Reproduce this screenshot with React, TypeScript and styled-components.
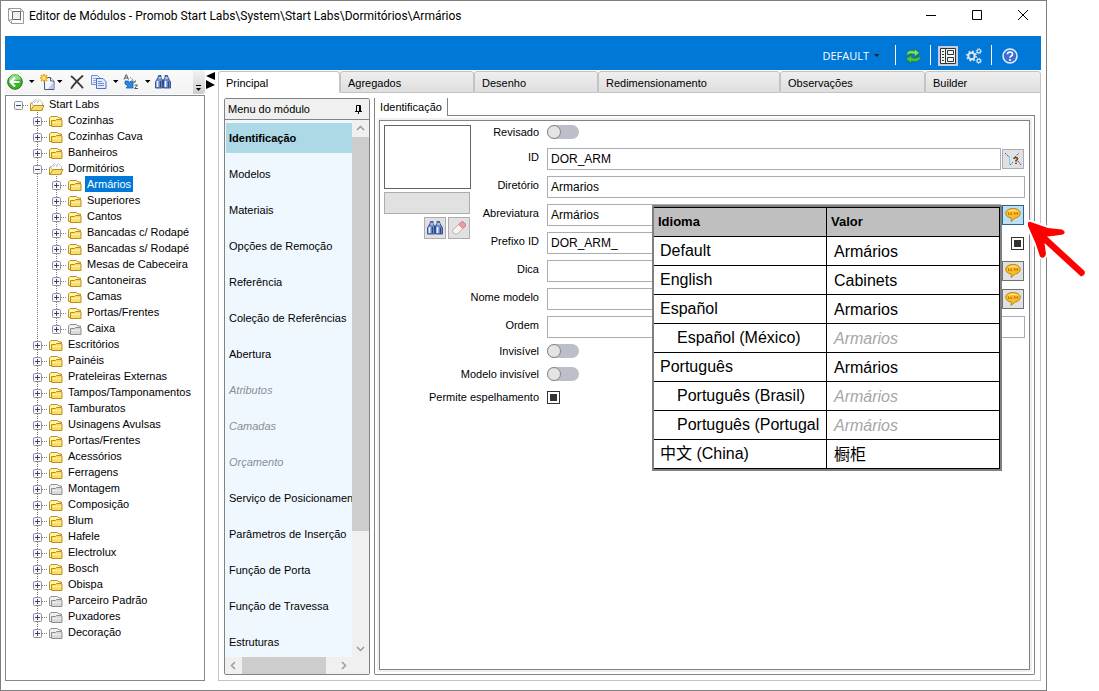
import React from "react";
import styled, { createGlobalStyle, css } from "styled-components";

const GlobalStyle = createGlobalStyle`
  *, *::before { box-sizing: border-box; }
  body { margin: 0; background: #fff; color: #000; font: 11px/16px "Liberation Sans", Arial, "Noto Sans CJK SC", sans-serif; }
  button, input { font: inherit; color: inherit; margin: 0; }
  button { border: 0; padding: 0; background: none; }
  svg { display: block; flex: none; }
`;

/* ---------- window frame ---------- */

const Window = styled.div`
  display: flex;
  flex-direction: column;
  height: 100vh;
  min-height: 500px;
  margin-right: 52px;
  padding: 0 5px 9px 4px;
  border: 1px solid #7f7f7f;
  background: #fff;
`;

const TitleBar = styled.header`
  display: flex;
  align-items: center;
  flex: none;
  height: 35px;
  padding: 0 12px 5px 3px;
`;

const Title = styled.h1`
  flex: 1;
  margin: 0 0 0 5px;
  font: 12px/16px Roboto, "Open Sans", sans-serif;
  white-space: nowrap;
  overflow: hidden;
`;

const WindowControls = styled.div`
  display: flex;
  gap: 34px;
`;

const Ribbon = styled.div`
  display: flex;
  align-items: center;
  justify-content: flex-end;
  flex: none;
  height: 34px;
  padding: 6px 21px 0 0;
  background: #0078d7;
`;

const RibbonMenu = styled.button`
  display: flex;
  align-items: center;
  gap: 5px;
  margin-right: 15px;
  color: #fff;
  font: 11px/16px "Open Sans", "Noto Sans", sans-serif;
`;

const RibbonDivider = styled.span`
  width: 1px;
  height: 20px;
  margin-bottom: 2px;
  background: #fff;
`;

const RibbonButton = styled.button<{ $active?: boolean }>`
  display: grid;
  place-items: center;
  width: 20px;
  height: 20px;
  background: ${(p) => (p.$active ? "#c4cede" : "transparent")};
`;

const RibbonGroup = styled.div`
  display: flex;
  gap: 6px;
  padding: 0 7px;
`;

const HelpGroup = styled(RibbonGroup)`
  padding: 0 0 0 8px;
`;

const Body = styled.div`
  display: flex;
  flex: 1;
  min-height: 0;
`;

/* ---------- tree column ---------- */

const Sidebar = styled.aside`
  display: flex;
  flex-direction: column;
  width: 200px;
  flex: none;
`;

const Toolbar = styled.div`
  display: flex;
  align-items: center;
  flex: none;
  height: 24px;
  margin-bottom: 1px;
  padding-left: 2px;
  border-radius: 0 3px 3px 0;
  background: linear-gradient(#fafafa, #f3f3f3);
`;

const ToolButton = styled.button<{ $width: number; $tight?: boolean }>`
  display: flex;
  align-items: center;
  gap: ${(p) => (p.$tight ? 2 : 6)}px;
  width: ${(p) => p.$width}px;
`;

const OverflowGrip = styled.button`
  display: flex;
  align-items: flex-end;
  justify-content: center;
  width: 12px;
  height: 24px;
  margin-left: auto;
  padding-bottom: 3px;
  border-radius: 0 3px 3px 0;
  background: linear-gradient(#f4f4f4, #cdcdcd);
`;

const Tree = styled.ul`
  flex: 1;
  min-height: 0;
  margin: 0;
  padding: 0 0 0 3px;
  border: 1px solid #828790;
  list-style: none;
  overflow: hidden;
`;

const TreeRow = styled.li`
  display: flex;
  height: 16px;
`;

const TreeSpacer = styled.span`
  width: 19px;
`;

const TreeLabel = styled.span<{ $selected?: boolean }>`
  padding: 0 2px;
  line-height: 16px;
  white-space: nowrap;
  ${(p) => p.$selected && css`background: #0078d7; color: #fff;`}
`;

const Splitter = styled.div`
  width: 13px;
  flex: none;
  padding: 2px 0 0 1px;
`;

/* ---------- page with tabs ---------- */

const Page = styled.main`
  display: flex;
  flex-direction: column;
  flex: 1;
  min-width: 0;
`;

const TabStrip = styled.div`
  display: grid;
  grid-template-columns: 122fr 134fr 124fr 182fr 145fr 116fr;
  flex: none;
  height: 23px;
  padding-top: 1px;
`;

const Tab = styled.button<{ $active?: boolean }>`
  min-width: 0;
  padding: 1px 0 0 7px;
  border: 1px solid #c3c3c3;
  border-bottom-color: ${(p) => (p.$active ? "#fff" : "#c3c3c3")};
  border-radius: 3px 3px 0 0;
  background: ${(p) => (p.$active ? "#fff" : "linear-gradient(#efefef, #dedede)")};
  text-align: left;
  white-space: nowrap;
  overflow: hidden;
`;

const PageContent = styled.div`
  display: flex;
  flex: 1;
  gap: 4px;
  min-height: 0;
  padding: 5px;
  border: 1px solid #c3c3c3;
  border-top: 0;
`;

/* ---------- module menu ---------- */

const MenuPanel = styled.nav`
  display: flex;
  flex-direction: column;
  width: 146px;
  flex: none;
  border: 1px solid #828282;
  border-radius: 2px;
  background: #f0f8ff;
`;

const MenuHeader = styled.div`
  display: flex;
  align-items: center;
  justify-content: space-between;
  flex: none;
  height: 21px;
  padding: 0 7px 0 3px;
  border-bottom: 1px solid #828282;
  background: #f0f0f0;
`;

const MenuScroller = styled.div`
  display: grid;
  grid-template: minmax(0, 1fr) 17px / minmax(0, 1fr) 17px;
  flex: 1;
  min-height: 0;
`;

const MenuItems = styled.div`
  display: flex;
  flex-direction: column;
  gap: 6px;
  min-width: 0;
  padding: 3px 0 0 1px;
  overflow: hidden;
`;

const MenuItem = styled.button<{ $selected?: boolean; $muted?: boolean }>`
  flex: none;
  height: 30px;
  padding: 0 0 0 3px;
  text-align: left;
  white-space: nowrap;
  overflow: hidden;
  background: ${(p) => (p.$selected ? "#add8e6" : "transparent")};
  font-weight: ${(p) => (p.$selected ? 700 : 400)};
  ${(p) => p.$muted && css`color: #8a8f94; font-style: italic;`}
`;

const ScrollBar = styled.div<{ $horizontal?: boolean }>`
  display: flex;
  flex-direction: ${(p) => (p.$horizontal ? "row" : "column")};
  background: #f0f0f0;
`;

const ScrollArrow = styled.button`
  display: grid;
  place-items: center;
  width: 17px;
  height: 17px;
  flex: none;
`;

const ScrollPart = styled.div<{ $size: number; $thumb?: boolean }>`
  flex: ${(p) => p.$size} 1 0;
  background: ${(p) => (p.$thumb ? "#cdcdcd" : "transparent")};
`;

const ScrollCorner = styled.div`
  background: #f0f0f0;
`;

/* ---------- identification panel ---------- */

const Panel = styled.section`
  display: flex;
  flex-direction: column;
  flex: 1;
  min-width: 0;
`;

const PanelTabs = styled.div`
  display: flex;
  flex: none;
  height: 18px;
`;

const PanelTab = styled.button`
  width: 74px;
  border: 1px solid #828282;
  border-width: 0 1px;
`;

const PanelTabRest = styled.div`
  flex: 1;
  border-bottom: 1px solid #828282;
`;

const PanelBody = styled.div`
  display: flex;
  flex: 1;
  min-height: 0;
  padding: 2px;
  border: 1px solid #828282;
  border-top: 0;
  border-radius: 0 0 2px 2px;
`;

const PanelFrame = styled.div`
  display: flex;
  flex: 1;
  min-width: 0;
  padding: 2px;
  background: #f0f0f0;
`;

const Form = styled.form`
  display: flex;
  flex: 1;
  min-width: 0;
  padding: 4px;
  border: 1px solid #828282;
  background: #fff;
`;

const Preview = styled.div`
  display: flex;
  flex-direction: column;
  width: 88px;
  flex: none;
`;

const PreviewImage = styled.div`
  width: 87px;
  height: 64px;
  margin-bottom: 3px;
  border: 1px solid #646464;
`;

const PreviewName = styled.div`
  width: 86px;
  height: 22px;
  margin-bottom: 3px;
  border: 1px solid #abadb3;
  background: #e1e1e1;
`;

const PreviewActions = styled.div`
  display: flex;
  justify-content: flex-end;
  gap: 2px;
  padding-right: 2px;
`;

const IconButton = styled.button<{ $tall?: boolean; $active?: boolean; $dark?: boolean }>`
  display: grid;
  place-items: center;
  flex: none;
  width: 22px;
  height: ${(p) => (p.$tall ? 22 : 20)}px;
  border: 1px solid ${(p) => (p.$active ? "#2c628b" : p.$dark ? "#707070" : "#adadad")};
  background: ${(p) => (p.$active ? "#bee0f4" : "#e1e1e1")};
`;

const Fields = styled.div`
  flex: 1;
  min-width: 0;
`;

const FieldRow = styled.div`
  position: relative;
  display: flex;
  align-items: center;
  height: 22px;
  margin-bottom: 6px;
`;

const SwitchRow = styled.div`
  display: flex;
  align-items: center;
  height: 14px;
  margin-bottom: 9px;
`;

const Label = styled.label<{ $raised?: boolean }>`
  display: flex;
  justify-content: flex-end;
  width: 67px;
  flex: none;
  margin-right: 8px;
  white-space: nowrap;
  ${(p) => p.$raised && css`align-self: flex-start; line-height: 18px;`}
`;

const TextInput = styled.input`
  flex: 1;
  min-width: 0;
  height: 22px;
  padding: 0 3px;
  border: 1px solid #abadb3;
  border-radius: 0;
  background: #fff;
  font-size: 12px;
  outline: 0;
`;

const FieldEnd = styled.div`
  display: flex;
  justify-content: flex-end;
  width: 23px;
  margin-left: 1px;
  padding-right: 1px;
`;

const Switch = styled.input`
  appearance: none;
  width: 32px;
  height: 14px;
  border-radius: 7px;
  background: #bcbec9;
  &::before {
    content: "";
    display: block;
    width: 14px;
    height: 14px;
    border: 1px solid #858585;
    border-radius: 50%;
    background: #e4e4e4;
  }
`;

const Check = styled.input`
  appearance: none;
  display: grid;
  place-items: center;
  width: 13px;
  height: 13px;
  border: 1px solid #333;
  background: #fff;
  &::before {
    content: "";
    width: 7px;
    height: 7px;
    background: #333;
  }
`;

/* ---------- translation popup ---------- */

const Popup = styled.div`
  position: absolute;
  z-index: 1;
  top: 1px;
  right: 23px;
  width: 350px;
  border: 2px solid #808080;
  background: #fff;
`;

const LangTable = styled.table`
  width: 100%;
  table-layout: fixed;
  border-collapse: separate;
  border-spacing: 0;
  border-top: 1px solid #000;
  border-right: 1px solid #000;
  font-size: 16px;
  line-height: 18px;
`;

const HeadCell = styled.th`
  height: 29px;
  padding: 0 4px;
  border-bottom: 1px solid #000;
  background: #bfbfbf;
  font-size: 13px;
  text-align: left;
  &:first-child { width: 172px; }
  & + & { border-left: 1px solid #000; }
`;

const NameCell = styled.td<{ $nested?: boolean }>`
  height: 29px;
  padding: 0 7px 0 ${(p) => (p.$nested ? 23 : 6)}px;
  border-bottom: 1px solid #000;
`;

const NameText = styled.div`
  white-space: nowrap;
  overflow: hidden;
`;

const ValueCell = styled.td<{ $inherited?: boolean }>`
  height: 29px;
  padding: 2px 7px 0;
  border-bottom: 1px solid #000;
  border-left: 1px solid #000;
  ${(p) => p.$inherited && css`color: #a6a6a6; font-style: italic;`}
`;

const Pointer = styled.div`
  position: absolute;
  z-index: 2;
  top: 14px;
  right: -63px;
  pointer-events: none;
`;

/* ---------- icons ---------- */

const CubeIcon = () => (
  <svg width="16" height="16" viewBox="0 0 16 16" fill="none" stroke="#777">
    <path d="M.5.5h12l3 3v12h-12l-3-3z" stroke="#999" />
    <path d="M.5.5 4 3.500M15.500 3.500l-3 0M.5 12.500l3.500-1M12.500.5v12M3.500 12.500v3M3.500 11.500l-3 1" stroke="#aaa" />
    <path d="M4.500 3.500h8v8h-8z" fill="#efefef" stroke="#666" />
    <path d="m5 11 7-7" stroke="#fff" />
  </svg>
);

const Caret = ({ color = "#000" }: { color?: string }) => (
  <svg width="6" height="4" viewBox="0 0 6 4"><path d="M0 0h5.500L2.750 3z" fill={color} /></svg>
);

const BackIcon = () => (
  <svg width="16" height="16" viewBox="0 0 16 16">
    <circle cx="8" cy="8" r="7.300" fill="#3fae2a" stroke="#1d7a1a" />
    <path d="M2 7a6 6 0 0 1 12-1c-3-2-7 3-12 1z" fill="#8fdc7c" />
    <path d="M8 3.500 3.500 8 8 12.500M4 8h8.500" fill="none" stroke="#fff" strokeWidth="2.200" />
  </svg>
);

const NewIcon = () => (
  <svg width="15" height="16" viewBox="0 0 15 16">
    <path d="M4.500 3.500h6l3.500 3.500v8.500h-9.500z" fill="#f1f5fe" stroke="#4d5a7c" />
    <path d="M13.500 8v7H8z" fill="#b9c9ee" />
    <path d="M10.500 3.500V7H14" fill="#fff" stroke="#4d5a7c" />
    <path d="M4 0v8M0 4h8M1 1l6 6M7 1 1 7" stroke="#e59a12" strokeWidth="1.600" />
    <circle cx="4" cy="4" r="2" fill="#ffe45a" />
  </svg>
);

const DeleteIcon = () => (
  <svg width="14" height="14" viewBox="0 0 14 14" fill="none" stroke="#3c3c3c" strokeLinecap="round">
    <path d="M1.500 1.500C5 4 9 9 12.500 12.500" strokeWidth="1.800" />
    <path d="M12.500 1C8 5 4 9 1.500 13" strokeWidth="1.800" />
  </svg>
);

const CopyIcon = () => (
  <svg width="16" height="14" viewBox="0 0 16 14" stroke="#6d90d0">
    <path d="M.5.5h6l2 2v7h-8z" fill="#e9f0fd" />
    <path d="M2 3.500h4M2 5.500h4M2 7.500h3" stroke="#8fabde" />
    <path d="M5.500 3.500h6.500l3 3v7H5.500z" fill="#e3ecfd" stroke="#4b73bd" />
    <path d="M7 6.500h4M7 8.500h6M7 10.500h6" stroke="#6d90d0" />
  </svg>
);

const SortIcon = () => (
  <svg width="16" height="16" viewBox="0 0 16 16" fill="none">
    <path d="M1 5.500 3 .8h.5l2 4.700M2 4h3" stroke="#444" strokeWidth=".9" />
    <path d="m7 3 5 5M10 8.500h2.500V6" stroke="#888" strokeDasharray="2 .7" />
    <path d="M2 7h3.500l1 1.500L8 7h2v7H3l2-2-3-2z" fill="#2d86dc" stroke="#1464b4" strokeWidth=".8" />
    <path d="M11.500 11h3l-3 3.500h3.500" stroke="#444" strokeWidth=".9" />
  </svg>
);

const BinocularsIcon = () => (
  <svg width="16" height="14" viewBox="0 0 16 14">
    <path d="M3.500.5h2.500v2l1.500 2.500v8h-7V7L3 2.500zM10 .5h2.500l.5 2L15.500 7v6h-7V5L10 2.500z" fill="#6f8dc8" stroke="#2c4888" strokeWidth=".9" />
    <path d="M2.500 6v6M10.500 6v6" stroke="#eef3fd" strokeWidth="1.700" />
    <path d="M5.500 6v6M13.500 6.500v6" stroke="#2c4888" strokeWidth="1.200" />
    <path d="M3.500 3h3M10 3h3" stroke="#dce6fa" />
    <path d="M7 5.500h2v3H7z" fill="#2c4888" />
  </svg>
);

const EraserIcon = () => (
  <svg width="16" height="16" viewBox="0 0 16 16">
    <path d="M2 10 9.500 2.500q2-1.500 3.500 0l1 1q1.500 1.500 0 3L7 13.500q-2 1.500-3.500 0L2 12.500q-1-1 0-2.500z" fill="#f8f4f4" stroke="#b4aeb0" />
    <path d="m7.500 4.500 2-2q2-1.500 3.500 0l1 1q1.500 1.500 0 3l-2 2z" fill="#ee9aa4" stroke="#d8838e" />
  </svg>
);

const RefreshIcon = () => (
  <svg width="18" height="16" viewBox="0 0 18 16" stroke="#187d28" strokeWidth=".7">
    <path d="M2.500 7.500C2 3.500 6 1.500 10.500 3V.8L15.500 5l-5 3.800V6.300C8 5.500 5.500 5.500 2.500 7.500z" fill="#7fdc6a" />
    <path d="M16.500 8c.5 4.500-4 6.500-9 5v2.300L2 11l5.500-4v2.700c3 .8 6 .8 9-1.700z" fill="#55c048" />
  </svg>
);

const FormIcon = () => (
  <svg width="16" height="16" viewBox="0 0 16 16" fill="none" stroke="#333">
    <path d="M.5.5h15v15H.5z" fill="#f4f4f4" />
    <path d="M5.500.5v15M2 3.500h2M2 6.500h2M2 9.500h2M2 12.500h2M7.500 2.500h6v4h-6zM7.500 9.500h6v4h-6z" />
  </svg>
);

const GearsIcon = () => (
  <svg width="16" height="16" viewBox="0 0 16 16" fill="none" stroke="#e0e7ef">
    <circle cx="5.500" cy="8" r="3.200" strokeWidth="2" />
    <circle cx="5.500" cy="8" r="4.700" strokeWidth="1.500" strokeDasharray="1.850 1.850" />
    <circle cx="12.800" cy="3.200" r="1.700" strokeWidth="1.200" />
    <circle cx="12.800" cy="3.200" r="2.600" strokeDasharray="1 1" />
    <circle cx="12.800" cy="12.800" r="1.700" strokeWidth="1.200" />
    <circle cx="12.800" cy="12.800" r="2.600" strokeDasharray="1 1" />
  </svg>
);

const HelpIcon = () => (
  <svg width="16" height="16" viewBox="0 0 16 16" fill="none">
    <circle cx="8" cy="8" r="7" fill="#3b6fd6" stroke="#e4edfb" strokeWidth="1.500" />
    <path d="M5.500 6.300q0-2.300 2.500-2.300t2.500 2.200Q10.500 7.500 9 8.200q-1 .5-1 1.600" stroke="#fff" strokeWidth="1.700" />
    <circle cx="8" cy="12" r="1.100" fill="#fff" />
  </svg>
);

const FolderIcon = ({ gray, open }: { gray?: boolean; open?: boolean }) => {
  const line = gray ? "#8f8f8f" : "#b8901c";
  const fill = gray ? "#d9d9d9" : "#fbdc6a";
  const light = gray ? "#f0f0f0" : "#fff3ae";
  return (
    <svg width="19" height="16" viewBox="0 0 19 16" stroke={line}>
      {open ? (
        <>
          <path d="M2.500 14V7.500l1.500-1h3l1 1h6.500V14z" fill={light} />
          <path d="m4 7 3.500-3.500L9.500 5l2-1.500L15 7l-1.500 3H5z" fill="#fff" stroke="#a9b9c0" strokeWidth=".8" />
          <path d="m6 6.500 2-1.500M9 7l2-2" stroke="#8fb8d8" strokeWidth=".8" />
          <path d="M2.500 14.500 6 9.500h10l-2.500 5z" fill={fill} />
        </>
      ) : (
        <>
          <path d="M2.500 13.500V6L4 4.500h6.500L12 6h2.500v7.500z" fill={light} />
          <path d="M4.500 14.500V8.500h4l1-1h4.500l1 1v6z" fill={fill} />
          <path d="M5.500 10.500h8.500" stroke={light} />
        </>
      )}
    </svg>
  );
};

const Expander = ({ level, expanded, last }: { level: number; expanded?: boolean; last?: boolean }) => (
  <svg width="19" height="16" viewBox="0 0 19 16" fill="none">
    <g stroke="#808080" strokeDasharray="1 1">
      {level > 0 && <path d={last ? "M9.500 0v9" : "M9.500 0v16"} />}
      <path d="M14 9.500h5" />
    </g>
    <rect x="5.500" y="5.500" width="8" height="8" rx="1" fill="#f6f6f6" stroke="#919191" />
    <path d={expanded ? "M7 9.500h5" : "M7 9.500h5M9.500 7v5"} stroke="#2b4493" />
  </svg>
);

/* dotted line of the parent level that runs past its nested rows */
const GuideLine = () => (
  <svg width="19" height="16" viewBox="0 0 19 16">
    <path d="M9.500 0v16" stroke="#808080" strokeDasharray="1 1" />
  </svg>
);

const PinIcon = () => (
  <svg width="7" height="9" viewBox="0 0 7 9" fill="none" stroke="#000">
    <path d="M1.500 6V.5h4V6M4.500 0v6M0 6.500h7M3.500 6.500V9" />
  </svg>
);

const Chevron = ({ d }: { d: string }) => (
  <svg width="9" height="9" viewBox="0 0 9 9" fill="none" stroke="#9c9c9c" strokeWidth="1.500"><path d={d} /></svg>
);

const BalloonIcon = () => (
  <svg width="16" height="16" viewBox="0 0 16 16">
    <path d="M8 1.500c4.300 0 7.300 2 7.300 4.800 0 2.600-2.300 4.200-5 4.700L6 14.500l.3-3.500C3 10.600.7 8.800.7 6.300c0-2.800 3-4.800 7.300-4.800z" fill="#fbbc20" stroke="#a87818" strokeWidth=".8" />
    <path d="M2.500 4.500q5.500-4 11 0-5.500-1-11 0z" fill="#ffe690" />
    <path d="M3.500 5.500v2h1M6 5.500v2h1M9.500 5.500v2M11 5.500v2M12.500 5.500v2" stroke="#b0620c" strokeWidth=".9" fill="none" />
  </svg>
);

const TraceIcon = () => (
  <svg width="18" height="16" viewBox="0 0 18 16" fill="none">
    <path d="m1 2 4 4" stroke="#2c5ad8" strokeDasharray="2 1" />
    <path d="M5.500 5.500V14" stroke="#22b4e8" strokeDasharray="1 1" />
    <path d="m6 14 3-3M11 6l4-4M14 10l3 4" stroke="#2c5ad8" strokeDasharray="2 1" />
    <path d="M10 8q0-1.500 1.800-1.500T13.500 8q0 1-1.500 1.500v1M12 11.500v1.500" stroke="#7a3c10" strokeWidth="1.600" />
  </svg>
);

const arrowShape =
  "M4 5Q5 3 8 4.500L24 10 38 11.500q5 2.500 1 5-9 1.500-16 2L60.500 53q1.500 4-3.500 5.500L20.500 25 22 36q-2 6-6 2.500L11.500 25 4 8z";

const ArrowDrawing = () => (
  <svg width="64" height="64" viewBox="0 0 64 64" strokeLinejoin="round">
    <path d={arrowShape} fill="#fff" stroke="#fff" strokeWidth="4" />
    <path d={arrowShape} fill="#fe0000" />
  </svg>
);

/* ---------- data ---------- */

type Node = { name: string; level: number; gray?: boolean; open?: boolean; selected?: boolean; last?: boolean };

const nodes: Node[] = [
  { name: "Start Labs", level: 0, open: true },
  { name: "Cozinhas", level: 1 },
  { name: "Cozinhas Cava", level: 1 },
  { name: "Banheiros", level: 1 },
  { name: "Dormitórios", level: 1, open: true },
  { name: "Armários", level: 2, selected: true },
  { name: "Superiores", level: 2 },
  { name: "Cantos", level: 2 },
  { name: "Bancadas c/ Rodapé", level: 2 },
  { name: "Bancadas s/ Rodapé", level: 2 },
  { name: "Mesas de Cabeceira", level: 2 },
  { name: "Cantoneiras", level: 2 },
  { name: "Camas", level: 2 },
  { name: "Portas/Frentes", level: 2 },
  { name: "Caixa", level: 2, gray: true, last: true },
  { name: "Escritórios", level: 1 },
  { name: "Painéis", level: 1 },
  { name: "Prateleiras Externas", level: 1 },
  { name: "Tampos/Tamponamentos", level: 1 },
  { name: "Tamburatos", level: 1 },
  { name: "Usinagens Avulsas", level: 1 },
  { name: "Portas/Frentes", level: 1 },
  { name: "Acessórios", level: 1 },
  { name: "Ferragens", level: 1 },
  { name: "Montagem", level: 1, gray: true },
  { name: "Composição", level: 1 },
  { name: "Blum", level: 1 },
  { name: "Hafele", level: 1 },
  { name: "Electrolux", level: 1 },
  { name: "Bosch", level: 1 },
  { name: "Obispa", level: 1 },
  { name: "Parceiro Padrão", level: 1, gray: true },
  { name: "Puxadores", level: 1, gray: true },
  { name: "Decoração", level: 1, gray: true, last: true },
];

const tabs = ["Principal", "Agregados", "Desenho", "Redimensionamento", "Observações", "Builder"];

const menuItems = [
  "Identificação", "Modelos", "Materiais", "Opções de Remoção", "Referência",
  "Coleção de Referências", "Abertura", "Atributos", "Camadas", "Orçamento",
  "Serviço de Posicionamento", "Parâmetros de Inserção", "Função de Porta",
  "Função de Travessa", "Estruturas",
];
const mutedItems = ["Atributos", "Camadas", "Orçamento"];

const languages = [
  { name: "Default", value: "Armários" },
  { name: "English", value: "Cabinets" },
  { name: "Español", value: "Armarios" },
  { name: "Español (México)", value: "Armarios", nested: true },
  { name: "Português", value: "Armários" },
  { name: "Português (Brasil)", value: "Armários", nested: true },
  { name: "Português (Portugal)", value: "Armários", nested: true },
  { name: "中文 (China)", value: "橱柜" },
];

/* ---------- parts ---------- */

const TranslateButton = ({ active }: { active?: boolean }) => (
  <IconButton type="button" aria-label="Traduções" $active={active} $dark>
    <BalloonIcon />
  </IconButton>
);

type FieldProps = { id: string; label: string; value?: string; end?: React.ReactNode; children?: React.ReactNode };

const Field = ({ id, label, value = "", end, children }: FieldProps) => (
  <FieldRow>
    <Label htmlFor={id} $raised>{label}</Label>
    <TextInput id={id} type="text" defaultValue={value} />
    {end && <FieldEnd>{end}</FieldEnd>}
    {children}
  </FieldRow>
);

const SwitchField = ({ id, label }: { id: string; label: string }) => (
  <SwitchRow>
    <Label htmlFor={id}>{label}</Label>
    <Switch id={id} type="checkbox" role="switch" />
  </SwitchRow>
);

const Translations = () => (
  <Popup>
    <LangTable>
      <thead>
        <tr><HeadCell scope="col">Idioma</HeadCell><HeadCell scope="col">Valor</HeadCell></tr>
      </thead>
      <tbody>
        {languages.map((l) => (
          <tr key={l.name}>
            <NameCell $nested={l.nested}><NameText>{l.name}</NameText></NameCell>
            <ValueCell $inherited={l.nested}>{l.value}</ValueCell>
          </tr>
        ))}
      </tbody>
    </LangTable>
  </Popup>
);

export default function App() {
  return (
    <>
      <GlobalStyle />
      <Window>
        <TitleBar>
          <CubeIcon />
          <Title>Editor de Módulos - Promob Start Labs\System\Start Labs\Dormitórios\Armários</Title>
          <WindowControls>
            <button aria-label="Minimizar">
              <svg width="12" height="12" viewBox="0 0 12 12"><path d="M1 5.500h10" stroke="#000" /></svg>
            </button>
            <button aria-label="Maximizar">
              <svg width="12" height="12" viewBox="0 0 12 12"><path d="M1.500.5h9v9h-9z" fill="none" stroke="#000" /></svg>
            </button>
            <button aria-label="Fechar">
              <svg width="12" height="12" viewBox="0 0 12 12"><path d="m1 0 10 10M11 0 1 10" stroke="#000" /></svg>
            </button>
          </WindowControls>
        </TitleBar>

        <Ribbon>
          <RibbonMenu aria-haspopup="menu">DEFAULT <Caret color="#10243c" /></RibbonMenu>
          <RibbonDivider />
          <RibbonGroup><RibbonButton aria-label="Atualizar"><RefreshIcon /></RibbonButton></RibbonGroup>
          <RibbonDivider />
          <RibbonGroup>
            <RibbonButton $active aria-label="Formulário"><FormIcon /></RibbonButton>
            <RibbonButton aria-label="Configurações"><GearsIcon /></RibbonButton>
          </RibbonGroup>
          <RibbonDivider />
          <HelpGroup><RibbonButton aria-label="Ajuda"><HelpIcon /></RibbonButton></HelpGroup>
        </Ribbon>

        <Body>
          <Sidebar>
            <Toolbar>
              <ToolButton $width={33} aria-label="Voltar"><BackIcon /><Caret /></ToolButton>
              <ToolButton $width={30} $tight aria-label="Novo"><NewIcon /><Caret /></ToolButton>
              <ToolButton $width={21} aria-label="Excluir"><DeleteIcon /></ToolButton>
              <ToolButton $width={32} aria-label="Copiar"><CopyIcon /><Caret /></ToolButton>
              <ToolButton $width={32} aria-label="Ordenar"><SortIcon /><Caret /></ToolButton>
              <ToolButton $width={21} aria-label="Localizar"><BinocularsIcon /></ToolButton>
              <OverflowGrip aria-label="Mais opções">
                <svg width="6" height="6" viewBox="0 0 6 6"><path d="M0 .5h5" stroke="#000" /><path d="M0 3h5L2.500 6z" /></svg>
              </OverflowGrip>
            </Toolbar>
            <Tree role="tree">
              {nodes.map((n, i) => (
                <TreeRow key={i} role="treeitem" aria-selected={!!n.selected} aria-expanded={!!n.open}>
                  {n.level > 0 && <TreeSpacer />}
                  {n.level > 1 && <GuideLine />}
                  <Expander level={n.level} expanded={n.open} last={n.last} />
                  <FolderIcon gray={n.gray} open={n.open} />
                  <TreeLabel $selected={n.selected}>{n.name}</TreeLabel>
                </TreeRow>
              ))}
            </Tree>
          </Sidebar>

          <Splitter>
            <svg width="9" height="17" viewBox="0 0 9 17"><path d="M9 0v8L0 4zM0 8l9 5-9 4z" /></svg>
          </Splitter>

          <Page>
            <TabStrip role="tablist">
              {tabs.map((t, i) => (
                <Tab key={t} role="tab" aria-selected={i === 0} $active={i === 0}>{t}</Tab>
              ))}
            </TabStrip>
            <PageContent>
              <MenuPanel>
                <MenuHeader>Menu do módulo <PinIcon /></MenuHeader>
                <MenuScroller>
                  <MenuItems>
                    {menuItems.map((m, i) => (
                      <MenuItem key={m} $selected={i === 0} $muted={mutedItems.includes(m)}>{m}</MenuItem>
                    ))}
                  </MenuItems>
                  <ScrollBar>
                    <ScrollArrow aria-label="Rolar para cima"><Chevron d="M1 6l3.500-3.500L8 6" /></ScrollArrow>
                    <ScrollPart $size={394} $thumb />
                    <ScrollPart $size={109} />
                    <ScrollArrow aria-label="Rolar para baixo"><Chevron d="M1 3l3.500 3.500L8 3" /></ScrollArrow>
                  </ScrollBar>
                  <ScrollBar $horizontal>
                    <ScrollArrow aria-label="Rolar para a esquerda"><Chevron d="M6 1 2.500 4.500 6 8" /></ScrollArrow>
                    <ScrollPart $size={84} $thumb />
                    <ScrollPart $size={9} />
                    <ScrollArrow aria-label="Rolar para a direita"><Chevron d="M3 1l3.500 3.500L3 8" /></ScrollArrow>
                  </ScrollBar>
                  <ScrollCorner />
                </MenuScroller>
              </MenuPanel>

              <Panel>
                <PanelTabs>
                  <PanelTab>Identificação</PanelTab>
                  <PanelTabRest />
                </PanelTabs>
                <PanelBody>
                  <PanelFrame>
                    <Form>
                      <Preview>
                        <PreviewImage />
                        <PreviewName />
                        <PreviewActions>
                          <IconButton type="button" $tall aria-label="Procurar imagem"><BinocularsIcon /></IconButton>
                          <IconButton type="button" $tall aria-label="Limpar imagem"><EraserIcon /></IconButton>
                        </PreviewActions>
                      </Preview>
                      <Fields>
                        <SwitchField id="revisado" label="Revisado" />
                        <Field
                          id="codigo"
                          label="ID"
                          value="DOR_ARM"
                          end={<IconButton type="button" aria-label="Referências do ID"><TraceIcon /></IconButton>}
                        />
                        <Field id="diretorio" label="Diretório" value="Armarios" />
                        <Field id="abreviatura" label="Abreviatura" value="Armários" end={<TranslateButton active />}>
                          <Translations />
                          <Pointer><ArrowDrawing /></Pointer>
                        </Field>
                        <Field
                          id="prefixo"
                          label="Prefixo ID"
                          value="DOR_ARM_"
                          end={<Check type="checkbox" defaultChecked aria-label="Usar prefixo" />}
                        />
                        <Field id="dica" label="Dica" end={<TranslateButton />} />
                        <Field id="nome" label="Nome modelo" end={<TranslateButton />} />
                        <Field id="ordem" label="Ordem" />
                        <SwitchField id="invisivel" label="Invisível" />
                        <SwitchField id="modelo-invisivel" label="Modelo invisível" />
                        <SwitchRow>
                          <Label htmlFor="espelhamento">Permite espelhamento</Label>
                          <Check id="espelhamento" type="checkbox" defaultChecked />
                        </SwitchRow>
                      </Fields>
                    </Form>
                  </PanelFrame>
                </PanelBody>
              </Panel>
            </PageContent>
          </Page>
        </Body>
      </Window>
    </>
  );
}
